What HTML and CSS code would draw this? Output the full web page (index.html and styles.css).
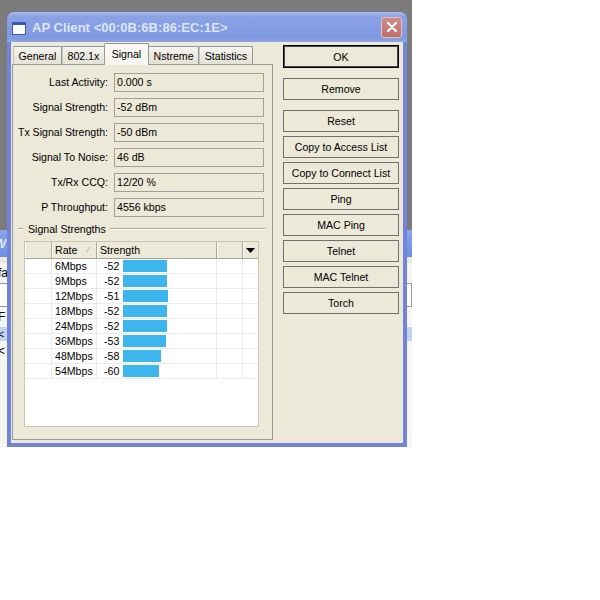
FILE: index.html
```html
<!DOCTYPE html>
<html lang="en">
<head>
  <meta charset="UTF-8">
  <title>AP Client</title>
  <link rel="stylesheet" href="styles.css">
</head>
<body>
  <div class="desktop">
    <!-- window behind the dialog, only its edges show -->
    <div class="bgwin">
      <div class="bgwin-title">Wi</div>
      <div class="bgwin-body">
        <div class="bgwin-text">fa</div>
        <div class="bgwin-box"></div>
        <div class="bgwin-text">F</div>
        <div class="bgwin-sel">&lt;</div>
        <div class="bgwin-text">&lt;</div>
      </div>
    </div>

    <div class="dialog">
      <div class="titlebar">
        <span class="app-icon"></span>
        <span class="title">AP Client &lt;00:0B:6B:86:EC:1E&gt;</span>
        <span class="close">
          <svg width="10" height="10" viewBox="0 0 10 10"><path d="M1 1 L9 9 M9 1 L1 9" stroke="#fff" stroke-width="2.2" stroke-linecap="round"/></svg>
        </span>
      </div>

      <div class="client">
        <div class="tabs">
          <div class="tabstrip">
            <span class="tab">General</span>
            <span class="tab">802.1x</span>
            <span class="tab active">Signal</span>
            <span class="tab">Nstreme</span>
            <span class="tab">Statistics</span>
          </div>
          <div class="panel">
            <div class="fields">
              <label>Last Activity:</label><div class="field">0.000 s</div>
              <label>Signal Strength:</label><div class="field">-52 dBm</div>
              <label>Tx Signal Strength:</label><div class="field">-50 dBm</div>
              <label>Signal To Noise:</label><div class="field">46 dB</div>
              <label>Tx/Rx CCQ:</label><div class="field">12/20 %</div>
              <label>P Throughput:</label><div class="field">4556 kbps</div>
            </div>

            <div class="group">
              <span class="group-dash"></span>
              <span class="group-label">Signal Strengths</span>
              <span class="group-line"></span>
            </div>

            <div class="grid">
              <div class="grid-head">
                <span class="hcell"></span>
                <span class="hcell sort">Rate
                  <svg width="5" height="6" viewBox="0 0 5 6"><path d="M0 6 L4 0" stroke="#bdb9aa" stroke-width="1"/></svg>
                </span>
                <span class="hcell">Strength</span>
                <span class="hcell"></span>
                <span class="hcell menu">
                  <svg width="9" height="5" viewBox="0 0 9 5"><polygon points="0,0 9,0 4.5,5" fill="#000"/></svg>
                </span>
              </div>
              <div class="grid-row"><span></span><span>6Mbps</span><span class="str"><i>-52</i><b class="bar" style="width:44px"></b></span><span></span><span></span></div>
              <div class="grid-row"><span></span><span>9Mbps</span><span class="str"><i>-52</i><b class="bar" style="width:44px"></b></span><span></span><span></span></div>
              <div class="grid-row"><span></span><span>12Mbps</span><span class="str"><i>-51</i><b class="bar" style="width:45px"></b></span><span></span><span></span></div>
              <div class="grid-row"><span></span><span>18Mbps</span><span class="str"><i>-52</i><b class="bar" style="width:44px"></b></span><span></span><span></span></div>
              <div class="grid-row"><span></span><span>24Mbps</span><span class="str"><i>-52</i><b class="bar" style="width:44px"></b></span><span></span><span></span></div>
              <div class="grid-row"><span></span><span>36Mbps</span><span class="str"><i>-53</i><b class="bar" style="width:43px"></b></span><span></span><span></span></div>
              <div class="grid-row"><span></span><span>48Mbps</span><span class="str"><i>-58</i><b class="bar" style="width:38px"></b></span><span></span><span></span></div>
              <div class="grid-row"><span></span><span>54Mbps</span><span class="str"><i>-60</i><b class="bar" style="width:36px"></b></span><span></span><span></span></div>
            </div>
          </div>
        </div>

        <div class="buttons">
          <button class="btn default">OK</button>
          <button class="btn spaced">Remove</button>
          <button class="btn">Reset</button>
          <button class="btn">Copy to Access List</button>
          <button class="btn">Copy to Connect List</button>
          <button class="btn">Ping</button>
          <button class="btn">MAC Ping</button>
          <button class="btn">Telnet</button>
          <button class="btn">MAC Telnet</button>
          <button class="btn">Torch</button>
        </div>
      </div>
    </div>
  </div>
</body>
</html>
```

FILE: styles.css
```css
:root {
  --face: #ece9d8;
  --frame: #7383da;
  --edge: #aca899;
  --bar: #3cb6ec;
}

body {
  margin: 0;
  background: #fff;
  font-family: 'Liberation Sans', Arial, sans-serif;
  font-size: 10.6px;
  color: #000;
}

.desktop {
  position: relative;
  width: 412px;
  height: 447px;
  background: #7b7b7b;
  overflow: hidden;
}

/* background window */
.bgwin {
  position: absolute;
  left: -20px;
  top: 230px;
  width: 432px;
  height: 217px;
  display: flex;
  flex-direction: column;
}

.bgwin-title {
  height: 27px;
  padding-left: 14px;
  line-height: 27px;
  background: linear-gradient(#8aa6ea, #6b8fe2);
  color: #dfe8fb;
  font-weight: bold;
  font-style: italic;
  font-size: 13px;
}

.bgwin-body {
  flex: 1;
  background: #f6f5ef;
  padding: 4px 0 0 18px;
  display: flex;
  flex-direction: column;
  gap: 4px;
  border-top: 6px solid var(--face);
}

.bgwin-text {
  height: 12px;
  line-height: 12px;
  font-size: 12px;
}

.bgwin-box {
  height: 22px;
  border: 1px solid #999;
  background: #fff;
}

.bgwin-sel {
  height: 14px;
  line-height: 14px;
  background: #c2d3f2;
  margin-left: -18px;
  padding-left: 18px;
}

/* dialog */
.dialog {
  position: absolute;
  left: 7px;
  top: 12px;
  width: 400px;
  height: 435px;
  display: flex;
  flex-direction: column;
}

.titlebar {
  height: 30px;
  display: flex;
  align-items: center;
  padding: 0 5px;
  border-radius: 7px 7px 0 0;
  background: linear-gradient(#a9bbee, #8ba2e5 15%, #7f98e1 85%, #8ea4e4);
}

.app-icon {
  width: 12px;
  height: 9px;
  border: 1px solid #3b58b8;
  border-top: 3px solid #3b58b8;
  background: #fff;
  margin-right: 6px;
  margin-top: 2px;
}

.title {
  flex: 1;
  color: #dde6fa;
  font-weight: bold;
  font-size: 13px;
  letter-spacing: 0.05px;
}

.close {
  width: 19px;
  height: 19px;
  border: 1px solid #e5c2c0;
  border-radius: 3px;
  background: linear-gradient(#d08c88, #c06f6b);
  display: flex;
  align-items: center;
  justify-content: center;
}

.client {
  flex: 1;
  display: flex;
  background: var(--face);
  border: 4px solid var(--frame);
  border-top: none;
}

/* tab control */
.tabs {
  width: 261px;
  margin-left: 1px;
  display: flex;
  flex-direction: column;
}

.tabstrip {
  height: 22px;
  display: flex;
  align-items: flex-end;
  padding-left: 1px;
}

.tab {
  height: 18px;
  line-height: 18px;
  padding: 0 4.6px;
  margin-bottom: -1px;
  border: 1px solid #919b9c;
  border-bottom: none;
  border-left-color: #c9c7bb;
  background: linear-gradient(#f4f3ee, #e3e0d3);
}

.tab.active {
  height: 21px;
  line-height: 20px;
  padding: 0 6.8px;
  margin: 0 -1px -1px -1px;
  position: relative;
  background: #f7f6f1;
  border-left-color: #919b9c;
  border-radius: 2px 2px 0 0;
}

.panel {
  flex: 1;
  margin-bottom: 3px;
  border: 1px solid #919b9c;
  display: flex;
  flex-direction: column;
}

.fields {
  display: grid;
  grid-template-columns: 95px 150px;
  column-gap: 6px;
  row-gap: 6px;
  margin-top: 8px;
}

.fields label {
  text-align: right;
  line-height: 19px;
}

.field {
  height: 17px;
  line-height: 17px;
  padding-left: 2px;
  border: 1px solid #a3a196;
}

.group {
  display: flex;
  align-items: center;
  height: 14px;
  margin: 5px 0 0 5px;
}

.group-dash {
  width: 5px;
  border-top: 1px solid var(--edge);
  border-bottom: 1px solid #fff;
}

.group-label {
  margin: 0 4px 0 5px;
}

.group-line {
  width: 155px;
  border-top: 1px solid var(--edge);
  border-bottom: 1px solid #fff;
}

/* strengths list */
.grid {
  width: 233px;
  height: 184px;
  margin: 5px 0 0 11px;
  background: #fff;
  border: 1px solid #c9c6b6;
}

.grid-head,
.grid-row {
  display: grid;
  grid-template-columns: 27px 45px 120px 26px 1fr;
}

.grid-head {
  height: 16px;
  border-bottom: 1px solid var(--edge);
  background: var(--face);
}

.hcell {
  line-height: 16px;
  padding-left: 3px;
  border-right: 1px solid var(--edge);
  box-shadow: inset 1px 0 #fff;
}

.hcell.sort {
  display: flex;
  align-items: center;
  justify-content: space-between;
  padding-right: 5px;
}

.hcell.menu {
  border-right: none;
  display: flex;
  align-items: center;
  justify-content: center;
  padding-left: 0;
}

.grid-row {
  height: 14px;
  border-bottom: 1px solid #ebebeb;
}

.grid-row span {
  line-height: 14px;
  padding-left: 3px;
  border-right: 1px solid #ebebeb;
}

.grid-row span:last-child {
  border-right: none;
}

.grid-row .str {
  display: flex;
  align-items: center;
  padding-left: 7px;
}

.str i {
  font-style: normal;
  width: 19px;
}

.bar {
  height: 12px;
  background: var(--bar);
}

/* buttons */
.buttons {
  width: 116px;
  margin: 3px 0 0 10px;
  display: flex;
  flex-direction: column;
  gap: 4px;
}

.btn {
  height: 22px;
  padding: 0;
  border: 1px solid #707070;
  background: var(--face);
  font-family: inherit;
  font-size: 10.6px;
  color: #000;
}

.btn.default {
  height: 23px;
  border-color: #000;
  box-shadow: inset 0 0 0 1px #4a4a4a;
  margin-bottom: 6px;
}

.btn.spaced {
  margin-bottom: 6px;
}
```
